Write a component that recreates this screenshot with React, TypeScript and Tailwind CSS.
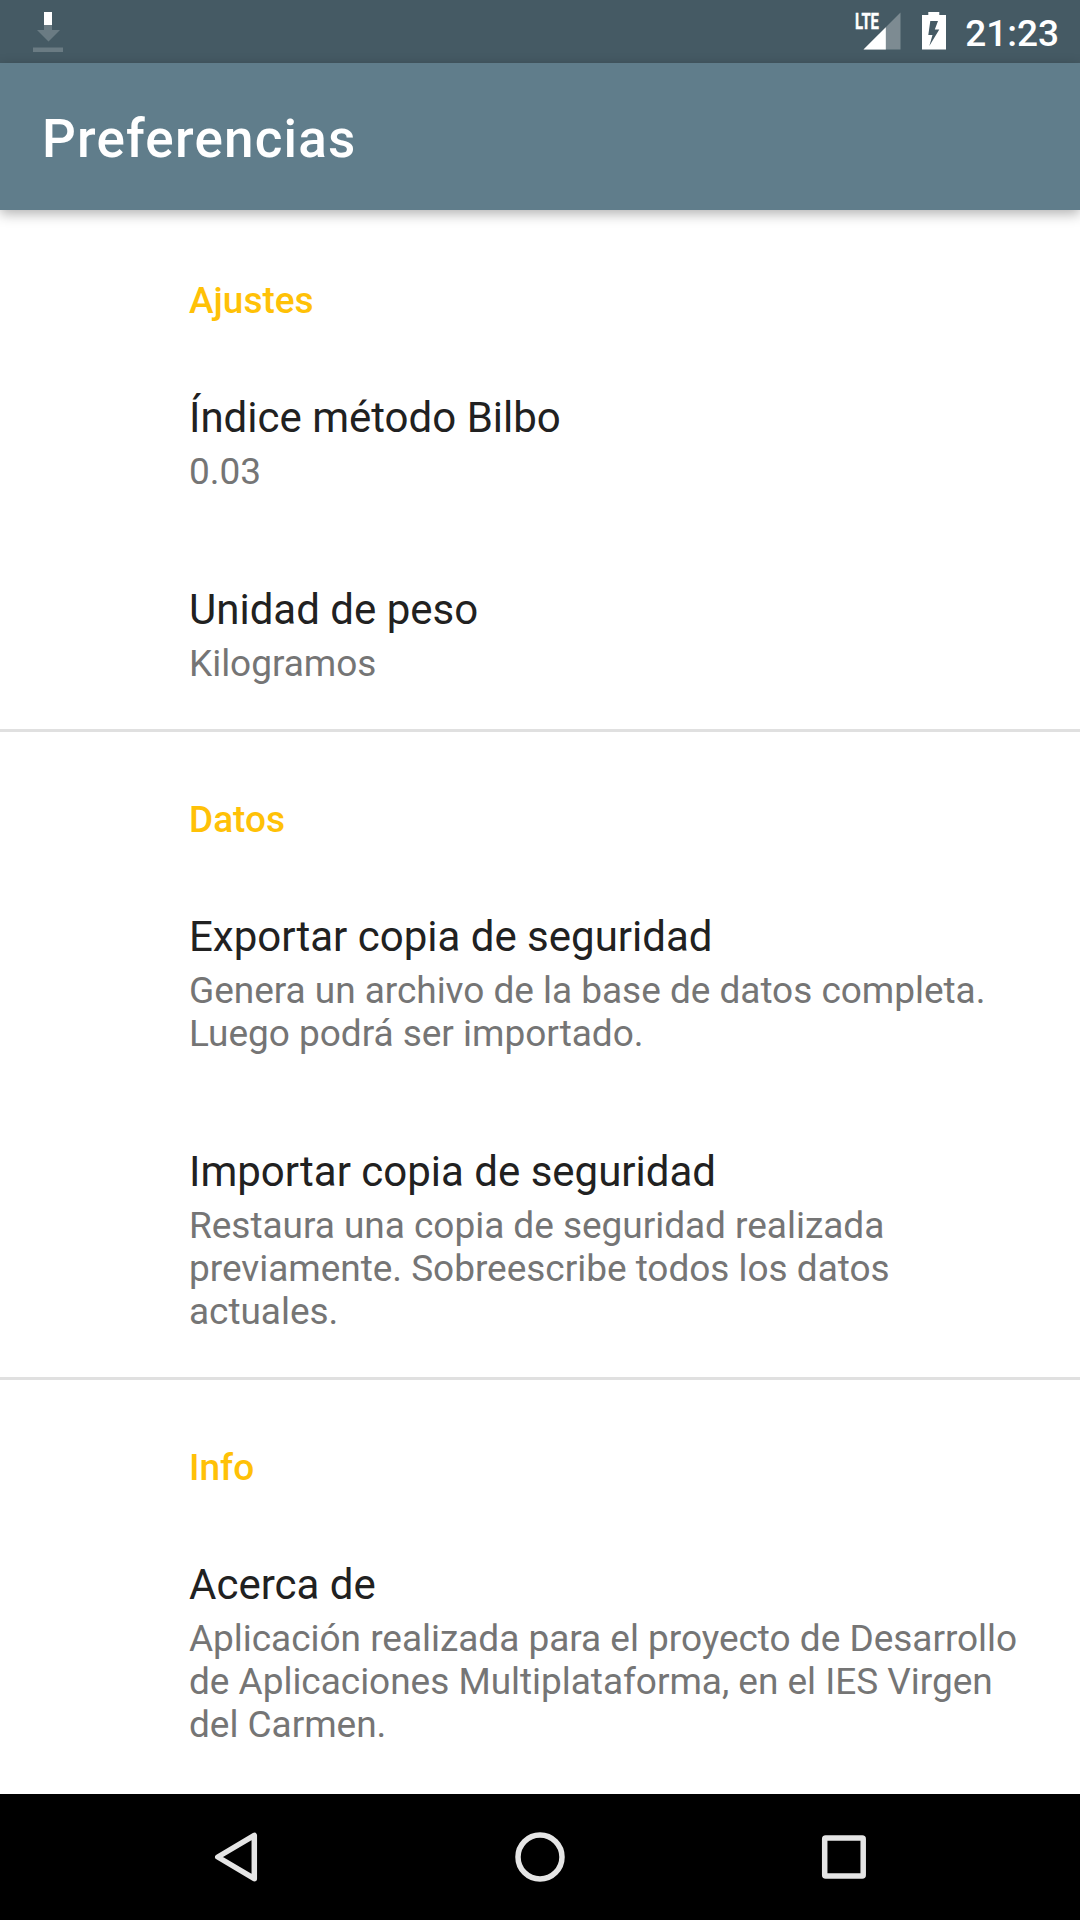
const sections = [
  { title: 'Ajustes', items: [
    { t: 'Índice método Bilbo', s: ['0.03'] },
    { t: 'Unidad de peso', s: ['Kilogramos'] },
  ] },
  { title: 'Datos', items: [
    { t: 'Exportar copia de seguridad', s: ['Genera un archivo de la base de datos completa.', 'Luego podrá ser importado.'] },
    { t: 'Importar copia de seguridad', s: ['Restaura una copia de seguridad realizada', 'previamente. Sobreescribe todos los datos', 'actuales.'] },
  ] },
  { title: 'Info', items: [
    { t: 'Acerca de', s: ['Aplicación realizada para el proyecto de Desarrollo', 'de Aplicaciones Multiplataforma, en el IES Virgen', 'del Carmen.'] },
  ] },
];

export default function App() {
  return (
    <div className="flex h-[1920px] w-[1080px] flex-col overflow-hidden bg-white font-['Roboto',sans-serif]">
      <div className="flex h-[63px] shrink-0 items-center bg-[#455a64]">
        <svg className="ml-[32px]" width="32" height="63" viewBox="32 0 32 63">
          <path d="M44 25h8v5h8L48.500 41.500 37 30h7z" fill="#6a7b83" />
          <path d="M33 47.500h30v4.500H33z" fill="#6a7b83" />
          <path d="M44 12h8v13h-8z" fill="#fff" />
        </svg>
        <span className="grow" />
        <svg width="120" height="63" viewBox="845 0 120 63">
          <path d="M900.500 12.500v37h-37z" fill="#7d8b92" />
          <path d="M885.800 27.200v22.300h-22.300z" fill="#fff" />
          <text x="855" y="29.200" fontSize="22.500" fontWeight="700" textLength="24" lengthAdjust="spacingAndGlyphs" fill="#fff" stroke="#fff" strokeWidth="0.400">LTE</text>
          <path fillRule="evenodd" d="M928.300 12h11v3h6.700v34.500h-24V15h6.300zM930.300 21l-2 14h4.200l-3.200 11 10-16.500H934.800L938 21z" fill="#fff" />
        </svg>
        <span className="relative top-[2px] mr-[21px] text-[37px] font-medium text-white">21:23</span>
      </div>
      <header className="z-10 flex h-[147px] shrink-0 items-center bg-[#607d8b] pt-[6px] pl-[42px] shadow-[0_4px_12px_rgba(0,0,0,0.3)]">
        <h1 className="text-[53px] font-medium tracking-[1.2px] text-white">Preferencias</h1>
      </header>
      <main className="min-h-0 grow">
        {sections.map((g, i) => (
          <section key={g.title} className={i < 2 ? 'border-b-[3px] border-[#e0e0e0] pl-[189px]' : 'pl-[189px]'}>
            <h2 className={i === 0 ? 'pt-[69px] pb-[23px] text-[37px] leading-[43px] font-medium text-[#ffc107]' : 'pt-[66px] pb-[23px] text-[37px] leading-[43px] font-medium text-[#ffc107]'}>{g.title}</h2>
            {g.items.map((it) => (
              <div key={it.t} className="pt-[48px] pb-[44px]">
                <h3 className="pb-[8px] text-[42px] leading-[49px] text-[#212121]">{it.t}</h3>
                {it.s.map((l) => <p key={l} className="text-[37px] leading-[43px] tracking-[-0.030px] whitespace-nowrap text-[#757575]">{l}</p>)}
              </div>
            ))}
          </section>
        ))}
      </main>
      <nav className="z-10 h-[126px] shrink-0 bg-black">
        <svg width="1080" height="126" viewBox="0 1794 1080 126" fill="none" stroke="#e5e5e5" strokeWidth="5.500" strokeLinejoin="round">
          <path d="M254.300 1835.300v43.400L217.800 1857z" />
          <circle cx="540" cy="1857" r="22" />
          <rect x="824.700" y="1838" width="38.500" height="38" rx="1" />
        </svg>
      </nav>
    </div>
  );
}
